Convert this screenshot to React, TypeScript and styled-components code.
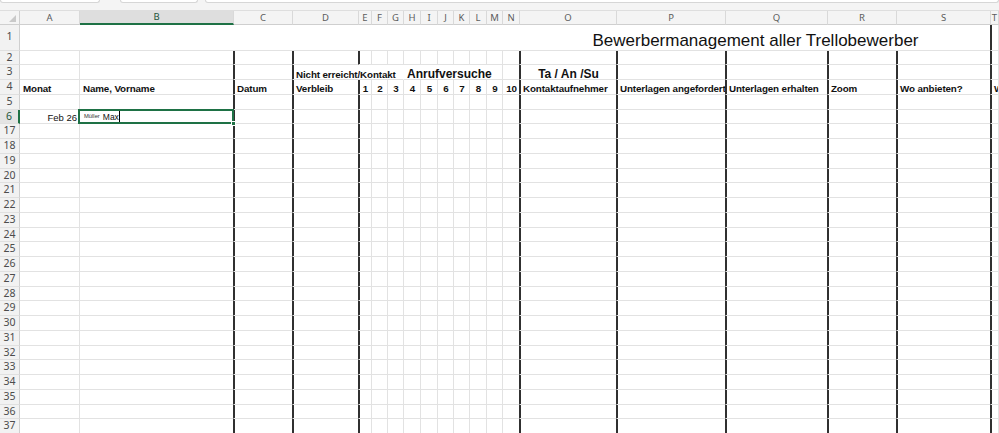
import React from 'react';
import styled, { createGlobalStyle, css } from 'styled-components';

const GRID =
  '20px 60px 154px 59px 66px 13px 16px 16px 17px 17px 16px 16px 17px 16px 17px 97px 109px 102px 69px 94px 1fr';

const GRIDLINE = '#e2e2e2';
const BORDER = '#303030';
const GREEN = '#1e7145';

const GlobalStyle = createGlobalStyle`
  html, body { margin: 0; padding: 0; background: #fff; overflow: hidden; }
  body { font-family: "Liberation Sans", Arial, sans-serif; -webkit-font-smoothing: antialiased; }
  * { box-sizing: border-box; }
`;

const Page = styled.div`
  width: 999px;
  height: 433px;
  overflow: hidden;
  display: flex;
  flex-direction: column;
  background: #fff;
`;

const TopStrip = styled.div`
  height: 10px;
  flex: none;
  display: flex;
  align-items: flex-start;
  background: #f4f4f4;
`;

const FieldBox = styled.div<{ $w?: number; $gap?: number }>`
  height: 3px;
  ${(p) => (p.$w ? css`width: ${p.$w}px; flex: none;` : css`flex: 1;`)}
  margin-left: ${(p) => p.$gap ?? 0}px;
  background: #fff;
  border: 1px solid #d6d6d6;
  border-top: none;
  border-radius: 0 0 4px 4px;
`;

const HeaderRow = styled.div`
  display: grid;
  grid-template-columns: ${GRID};
  height: 14.5px;
  flex: none;
  background: #f4f4f4;
  border-top: 1px solid #dedede;
`;

const Corner = styled.div`
  display: flex;
  align-items: flex-end;
  justify-content: flex-end;
  padding: 0 3px 2px 0;
  border-right: 1px solid #cfcfcf;
  border-bottom: 1px solid #cfcfcf;
`;

const ColHead = styled.div<{ $active?: boolean }>`
  display: flex;
  align-items: center;
  justify-content: center;
  font-family: "Noto Sans", "Liberation Sans", sans-serif;
  font-size: 9.5px;
  line-height: 1;
  color: ${(p) => (p.$active ? '#24553b' : '#5c5c5c')};
  background: ${(p) => (p.$active ? '#dedede' : 'transparent')};
  border-right: 1px solid #d9d9d9;
  border-bottom: ${(p) => (p.$active ? `2px solid ${GREEN}` : '1px solid #cfcfcf')};
  overflow: hidden;
  white-space: nowrap;
`;

const Body = styled.div`
  flex: 1;
  display: flex;
  flex-direction: column;
  overflow: hidden;
`;

const SheetRow = styled.div<{ $h: number }>`
  display: grid;
  grid-template-columns: ${GRID};
  height: ${(p) => p.$h}px;
  flex: none;
`;

const RowHead = styled.div<{ $selected?: boolean }>`
  display: flex;
  align-items: center;
  justify-content: center;
  font-family: "Noto Sans", "Liberation Sans", sans-serif;
  font-size: 10.5px;
  line-height: 1;
  color: ${(p) => (p.$selected ? '#24553b' : '#4c4c4c')};
  background: ${(p) => (p.$selected ? '#e4e4e4' : '#f2f2f2')};
  border-bottom: 1px solid #e0e0e0;
  border-right: ${(p) => (p.$selected ? `2px solid ${GREEN}` : '1px solid #cfcfcf')};
  padding-bottom: 1px;
`;

const Cell = styled.div<{
  $span: number;
  $thick: boolean;
  $open: boolean;
  $align: 'left' | 'center' | 'right';
  $selected: boolean;
}>`
  grid-column: span ${(p) => p.$span};
  position: relative;
  min-width: 0;
  display: flex;
  align-items: flex-end;
  justify-content: ${(p) =>
    p.$align === 'center' ? 'center' : p.$align === 'right' ? 'flex-end' : 'flex-start'};
  padding: 0 2px 0 3px;
  white-space: nowrap;
  overflow: ${(p) => (p.$selected ? 'visible' : 'hidden')};
  border-bottom: 1px solid ${GRIDLINE};
  border-right: 1px solid
    ${(p) => (p.$thick ? BORDER : p.$open ? 'transparent' : GRIDLINE)};
  ${(p) => p.$thick && css`box-shadow: 1px 0 0 ${BORDER};`}
  ${(p) => p.$selected && css`z-index: 2;`}
`;

const HeadText = styled.span`
  font-family: "Liberation Sans", Arial, sans-serif;
  font-weight: 700;
  font-size: 9.8px;
  letter-spacing: -0.12px;
  line-height: 1;
  color: #111;
  margin-bottom: -0.5px;
`;

const BigText = styled.span`
  font-family: "Liberation Sans", Arial, sans-serif;
  font-weight: 700;
  font-size: 12px;
  line-height: 1;
  color: #111;
  margin-bottom: -1px;
`;

const TitleText = styled.span`
  font-family: "Liberation Sans", Arial, sans-serif;
  font-size: 17px;
  line-height: 1;
  color: #111;
  margin-bottom: 1px;
`;

const ValueText = styled.span`
  font-family: "Liberation Sans", Arial, sans-serif;
  font-size: 9.5px;
  line-height: 1;
  color: #111;
  margin-bottom: 0.5px;
`;

const TinyText = styled.span`
  font-family: "Liberation Sans", Arial, sans-serif;
  font-size: 5.8px;
  line-height: 1;
  color: #333;
  margin: 0 3px 3px 1px;
`;

const TypedText = styled.span`
  font-family: "Liberation Sans", Arial, sans-serif;
  font-size: 8.5px;
  line-height: 1;
  color: #111;
  margin-bottom: 1.5px;
`;

const Caret = styled.span`
  width: 1px;
  height: 11px;
  background: #000;
  margin: 0 0 1px 0;
  align-self: flex-end;
`;

const Selection = styled.div`
  position: absolute;
  top: -1px;
  left: -2px;
  right: -1px;
  bottom: -1px;
  border: 2px solid ${GREEN};
  pointer-events: none;
`;

const FillHandle = styled.div`
  position: absolute;
  right: -4px;
  bottom: -4px;
  width: 5px;
  height: 5px;
  background: ${GREEN};
  border: 1px solid #fff;
`;

type Kind = 'head' | 'big' | 'title' | 'value';

type CellSpec = {
  col: string;
  span?: number;
  text?: string;
  kind?: Kind;
  align?: 'left' | 'center' | 'right';
  thick?: boolean;
  open?: boolean;
  selected?: boolean;
  content?: React.ReactNode;
};

type RowSpec = { label: string; h: number; cells: CellSpec[]; selected?: boolean };

const COLS = ['A', 'B', 'C', 'D', 'E', 'F', 'G', 'H', 'I', 'J', 'K', 'L', 'M', 'N', 'O', 'P', 'Q', 'R', 'S', 'T'];
const THICK = new Set(['B', 'C', 'D', 'N', 'O', 'P', 'Q', 'R', 'S']);
const ROW_H = 14.75;

const plain = (overrides: Record<string, Partial<CellSpec>> = {}): CellSpec[] =>
  COLS.map((col) => ({ col, thick: THICK.has(col), ...(overrides[col] || {}) }));

const head = (text: string, align: 'left' | 'center' = 'left'): Partial<CellSpec> => ({
  text,
  kind: 'head',
  align,
});

const ROWS: RowSpec[] = [
  {
    label: '1',
    h: 26,
    cells: [
      { col: 'A', span: 14, open: true },
      {
        col: 'O',
        span: 5,
        thick: true,
        kind: 'title',
        align: 'center',
        text: 'Bewerbermanagement aller Trellobewerber',
      },
      { col: 'T' },
    ],
  },
  { label: '2', h: ROW_H, cells: plain() },
  {
    label: '3',
    h: ROW_H,
    cells: [
      { col: 'A' },
      { col: 'B', thick: true },
      { col: 'C', thick: true },
      { col: 'D', span: 4, open: true, kind: 'head', text: 'Nicht erreicht/Kontakt' },
      { col: 'H', span: 6, kind: 'big', text: 'Anrufversuche' },
      { col: 'N', thick: true },
      { col: 'O', thick: true, kind: 'big', align: 'center', text: 'Ta / An /Su' },
      { col: 'P', thick: true },
      { col: 'Q', thick: true },
      { col: 'R', thick: true },
      { col: 'S', thick: true },
      { col: 'T' },
    ],
  },
  {
    label: '4',
    h: ROW_H,
    cells: plain({
      A: head('Monat'),
      B: head('Name, Vorname'),
      C: head('Datum'),
      D: head('Verbleib'),
      E: head('1', 'center'),
      F: head('2', 'center'),
      G: head('3', 'center'),
      H: head('4', 'center'),
      I: head('5', 'center'),
      J: head('6', 'center'),
      K: head('7', 'center'),
      L: head('8', 'center'),
      M: head('9', 'center'),
      N: head('10', 'center'),
      O: head('Kontaktaufnehmer'),
      P: head('Unterlagen angefordert'),
      Q: head('Unterlagen erhalten'),
      R: head('Zoom'),
      S: head('Wo anbieten?'),
      T: head('W'),
    }),
  },
  { label: '5', h: ROW_H, cells: plain() },
  {
    label: '6',
    h: ROW_H,
    selected: true,
    cells: plain({
      A: { kind: 'value', align: 'right', text: 'Feb 26' },
      B: {
        selected: true,
        content: (
          <>
            <TinyText>Müller</TinyText>
            <TypedText>Max</TypedText>
            <Caret />
            <Selection>
              <FillHandle />
            </Selection>
          </>
        ),
      },
    }),
  },
  ...Array.from({ length: 22 }, (_, i) => ({
    label: String(17 + i),
    h: ROW_H,
    cells: plain(),
  })),
];

const renderText = (kind: Kind | undefined, text: string | undefined) => {
  if (!text) return null;
  switch (kind) {
    case 'big':
      return <BigText>{text}</BigText>;
    case 'title':
      return <TitleText>{text}</TitleText>;
    case 'value':
      return <ValueText>{text}</ValueText>;
    default:
      return <HeadText>{text}</HeadText>;
  }
};

const CornerMark = () => (
  <svg width="7" height="7" viewBox="0 0 7 7" aria-hidden="true">
    <path d="M7 0 L7 7 L0 7 Z" fill="#c9c9c9" />
  </svg>
);

export default function App() {
  return (
    <Page>
      <GlobalStyle />
      <TopStrip>
        <FieldBox $w={100} />
        <FieldBox $w={78} $gap={20} />
        <FieldBox $gap={7} />
      </TopStrip>
      <HeaderRow>
        <Corner>
          <CornerMark />
        </Corner>
        {COLS.map((c) => (
          <ColHead key={c} $active={c === 'B'}>
            {c}
          </ColHead>
        ))}
      </HeaderRow>
      <Body>
        {ROWS.map((row) => (
          <SheetRow key={row.label} $h={row.h}>
            <RowHead $selected={row.selected}>{row.label}</RowHead>
            {row.cells.map((c) => (
              <Cell
                key={c.col}
                $span={c.span ?? 1}
                $thick={!!c.thick}
                $open={!!c.open}
                $align={c.align ?? 'left'}
                $selected={!!c.selected}
              >
                {c.content ?? renderText(c.kind, c.text)}
              </Cell>
            ))}
          </SheetRow>
        ))}
      </Body>
    </Page>
  );
}
